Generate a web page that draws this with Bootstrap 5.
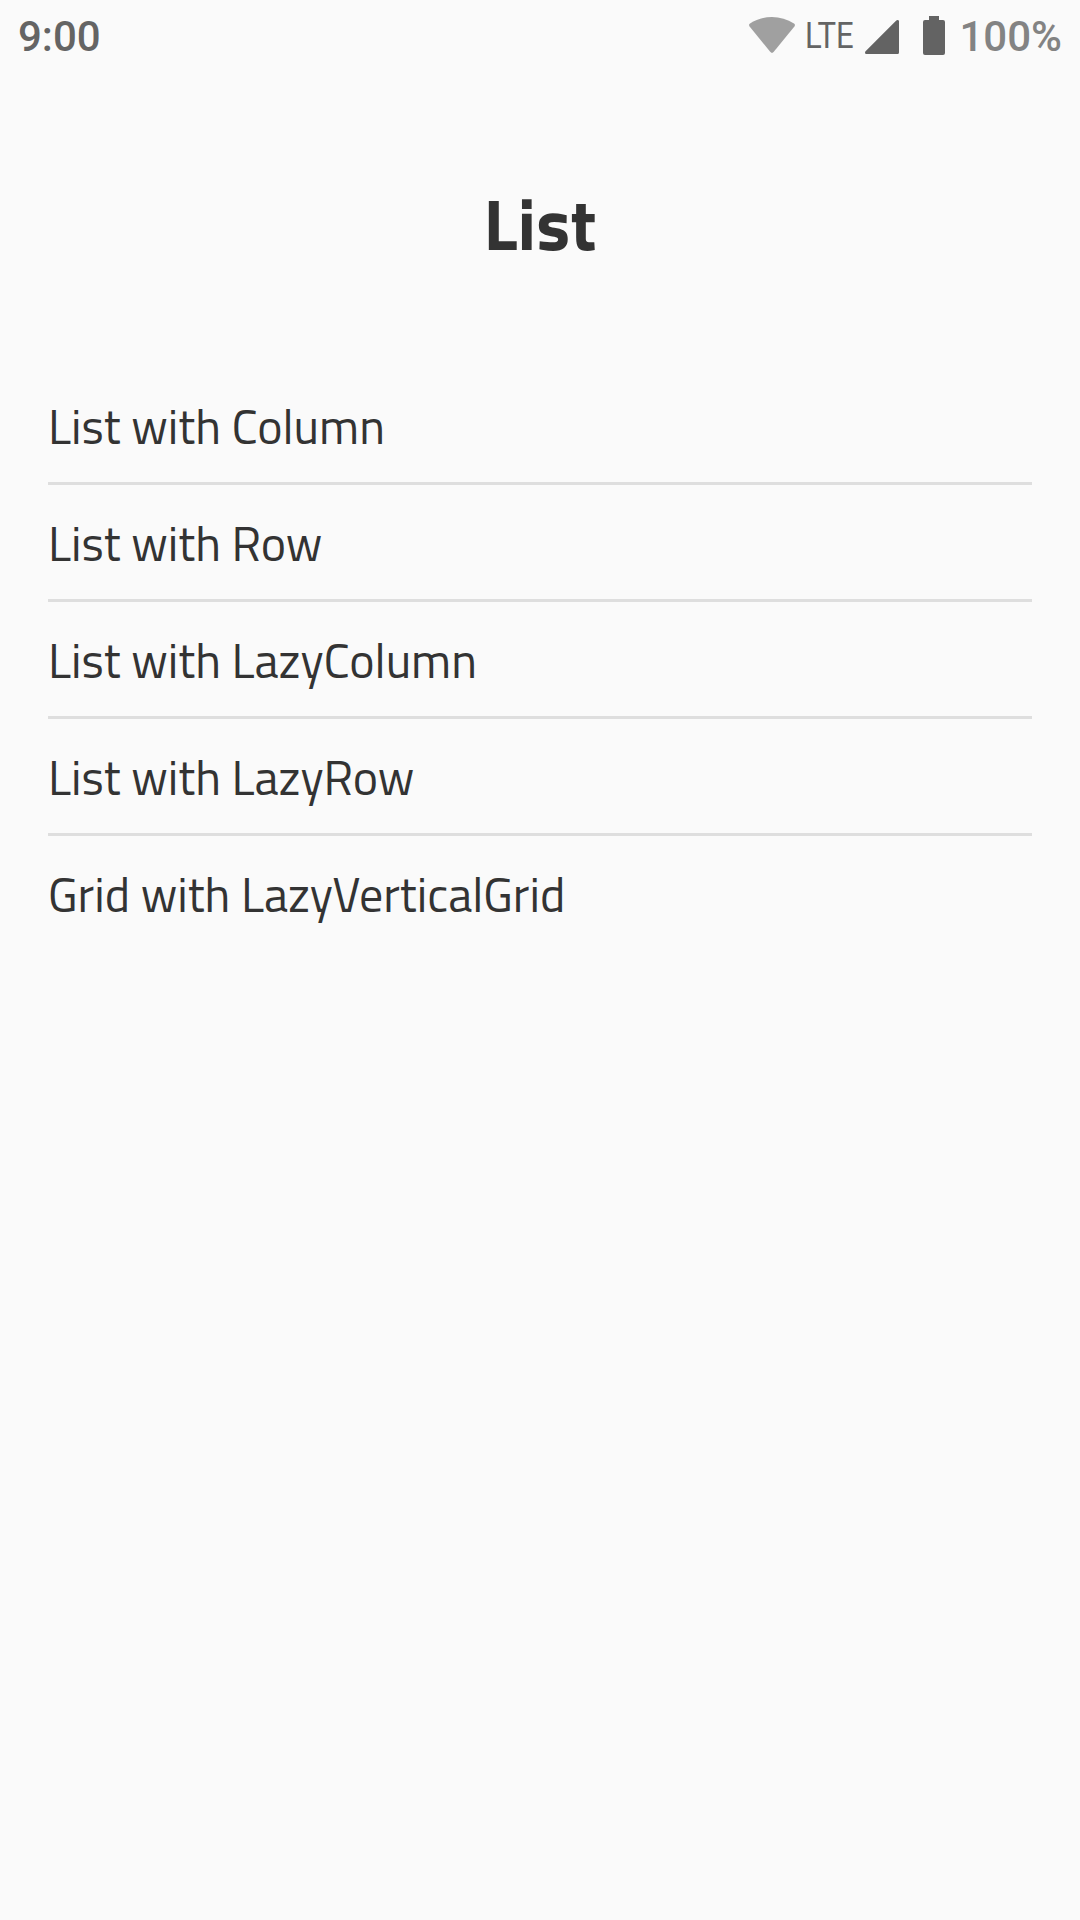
<!DOCTYPE html>
<html lang="en">
<head>
<meta charset="utf-8">
<meta name="viewport" content="width=device-width, initial-scale=1">
<title>List</title>
<link href="https://cdn.jsdelivr.net/npm/bootstrap@5.3.0/dist/css/bootstrap.min.css" rel="stylesheet">
<style>
body { background: #fafafa; color: #333; font-family: "Titillium Web", "DejaVu Sans Condensed", "DejaVu Sans", sans-serif; }
.status-bar { height: 72px; padding: 0 18px; font-family: Roboto, sans-serif; color: #646464; line-height: 75px; }
.clock { font-size: 42px; font-weight: 500; }
.network { width: 61px; font-size: 37px; line-height: 72px; transform: scaleX(.84); transform-origin: 0 50%; margin: 0 -10px 0 10px; }
.battery-level { font-size: 42px; font-weight: 500; color: #838383; margin-left: 14px; }
.status-bar svg { display: block; flex: none; }
.signal-icon { margin-left: 9px; }
.battery-icon { margin-left: 24px; }
.page-title { height: 296px; padding-top: 104px; font-family: inherit; font-size: 72px; font-weight: 700; line-height: 94px; }
.menu { padding: 0 48px; }
.menu .list-group-item { height: 117px; padding: 0; line-height: 118px; font-size: 48px; color: #333; background: transparent; border-color: #dedede; border-width: 0 0 3px; white-space: nowrap; }
.menu .list-group-item:last-child { border-bottom: 0; }
</style>
</head>
<body>
<header class="status-bar d-flex align-items-center justify-content-between">
  <span class="clock">9:00</span>
  <div class="d-flex align-items-center">
    <svg width="46" height="72" viewBox="0 0 46 72"><path fill="#a0a0a0" d="M.6 26.500Q-.7 24.800 1 23.600C14 14.900 32 14.900 45 23.600Q46.700 24.800 45.400 26.500L24.800 51.800Q23 54 21.200 51.800Z"/></svg>
    <span class="network">LTE</span>
    <svg class="signal-icon" width="34" height="72" viewBox="0 0 34 72"><path fill="#636363" d="M31 20.700Q32 19.800 33 20Q34 20.300 34 21.600V52.500Q34 54 32.500 54H1.200Q0 54 0 52.500Q0 51.600.8 50.900Z"/></svg>
    <svg class="battery-icon" width="22" height="72" viewBox="0 0 22 72"><path fill="#636363" d="M6 16H16V20H20Q22 20 22 22V53Q22 55 20 55H2Q0 55 0 53V22Q0 20 2 20H6Z"/></svg>
    <span class="battery-level">100%</span>
  </div>
</header>
<main>
  <h1 class="page-title text-center mb-0">List</h1>
  <nav class="menu list-group list-group-flush">
    <a href="#" class="list-group-item">List with Column</a>
    <a href="#" class="list-group-item">List with Row</a>
    <a href="#" class="list-group-item">List with LazyColumn</a>
    <a href="#" class="list-group-item">List with LazyRow</a>
    <a href="#" class="list-group-item">Grid with LazyVerticalGrid</a>
  </nav>
</main>
<script src="https://cdn.jsdelivr.net/npm/bootstrap@5.3.0/dist/js/bootstrap.bundle.min.js"></script>
</body>
</html>
